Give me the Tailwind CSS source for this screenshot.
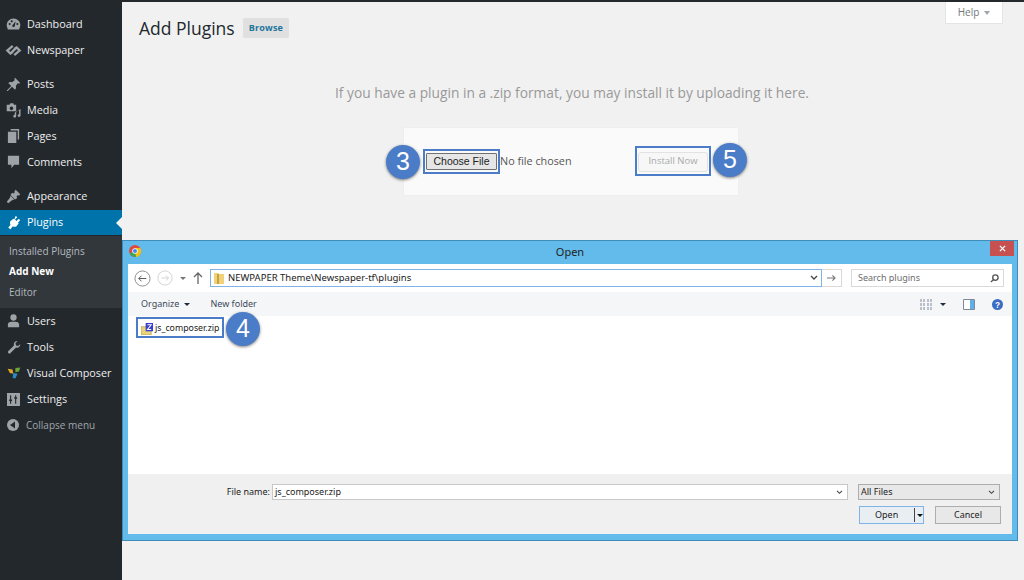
<!DOCTYPE html>
<html lang="en">
<head>
<meta charset="UTF-8">
<title>Add Plugins</title>
<script src="https://cdn.jsdelivr.net/npm/@tailwindcss/browser@4"></script>
</head>
<body class="w-[1024px] h-[580px] overflow-hidden bg-[#f1f1f1] font-['Open_Sans',sans-serif]">
<div class="relative flex h-[580px] w-[1024px] overflow-hidden">
  <!-- Sidebar -->
  <aside class="w-[122px] h-full shrink-0 bg-[#23282d] text-[10.800px] text-[#eeeeee] pt-[11px]">
    <div class="flex items-center h-[26px]">
      <div class="w-[27px] flex justify-center"><svg class="w-[15px] h-[14px]" viewBox="0 0 20 20" fill="#9ea3a8"><path d="M10 2a9.500 9.500 0 0 0-9 13l1 3h16l1-3a9.500 9.500 0 0 0-9-13zM4.500 11.500a1.500 1.500 0 1 1 0-3 1.500 1.500 0 0 1 0 3zm3-4a1.500 1.500 0 1 1 0-3 1.500 1.500 0 0 1 0 3zm3.500 6.500a2 2 0 0 1-3-1.500L13 6l-1 6a2 2 0 0 1-1 2zm4.500-2.500a1.500 1.500 0 1 1 0-3 1.500 1.500 0 0 1 0 3z"/></svg></div>
      <span>Dashboard</span>
    </div>
    <div class="flex items-center h-[26px]">
      <div class="w-[27px] flex justify-center"><svg class="w-[17px] h-[13px]" viewBox="0 0 22 16" fill="none" stroke="#9ea3a8" stroke-width="3"><path d="M10 2 3 8l4 4 3-2M12 14l7-6-4-4-3 2M8 11l6-6"/></svg></div>
      <span>Newspaper</span>
    </div>
    <div class="flex items-center h-[26px] mt-[8px]">
      <div class="w-[27px] flex justify-center"><svg class="w-[15px] h-[15px]" viewBox="0 0 20 20" fill="#9ea3a8"><path d="M12 1l7 7-2 1-1-1-3 4c1 2 0 4-1 5L8 13l-6 6-1-1 6-6-4-4c1-1 3-2 5-1l4-3-1-1z"/></svg></div>
      <span>Posts</span>
    </div>
    <div class="flex items-center h-[26px]">
      <div class="w-[27px] flex justify-center"><svg class="w-[16px] h-[15px]" viewBox="0 0 22 20" fill="#9ea3a8"><path d="M1 2h4l1-2h4l1 2h3v9H1zm6.500 2.500a2.500 2.500 0 1 0 0 5 2.500 2.500 0 0 0 0-5zM20 8v9a2 2 0 1 1-2-2V10l-4 1v7a2 2 0 1 1-2-2v-3z"/></svg></div>
      <span>Media</span>
    </div>
    <div class="flex items-center h-[26px]">
      <div class="w-[27px] flex justify-center"><svg class="w-[13px] h-[14px]" viewBox="0 0 18 20" fill="#9ea3a8"><path d="M5 0h12v15h-2V2H5zM1 4h12v16H1z"/></svg></div>
      <span>Pages</span>
    </div>
    <div class="flex items-center h-[26px]">
      <div class="w-[27px] flex justify-center"><svg class="w-[13px] h-[14px]" viewBox="0 0 18 20" fill="#9ea3a8"><path d="M1 1h16v13H10l-4 5v-5H1z"/></svg></div>
      <span>Comments</span>
    </div>
    <div class="flex items-center h-[26px] mt-[8px]">
      <div class="w-[27px] flex justify-center"><svg class="w-[15px] h-[15px]" viewBox="0 0 20 20" fill="#9ea3a8"><path d="M13 1l6 6-2 2-1-1-2 2 1 2-3 2-6-6 2-3 2 1 2-2-1-1zM6 9l5 5-3 1-5 4-2-2 4-5z"/></svg></div>
      <span>Appearance</span>
    </div>
    <div class="relative flex items-center h-[25px] mt-[1px] bg-[#0073aa] text-white">
      <div class="w-[27px] flex justify-center"><svg class="w-[15px] h-[15px]" viewBox="0 0 20 20" fill="#ffffff"><path d="M13 1l2 2-3 3 2 2 3-3 2 2-3 3 1 1-3 4c-2 1-4 1-5 0l-3 4-3-2 3-4c-1-2-1-3 0-5l4-3 1 1z"/></svg></div>
      <span>Plugins</span>
      <span class="absolute right-0 top-[7px] w-0 h-0 border-y-[6px] border-y-transparent border-r-[6px] border-r-[#f1f1f1]"></span>
    </div>
    <div class="h-[72px] mt-[1px] bg-[#32373c] pt-[5px] text-[10px] text-[#b4b9be] pl-[9px]">
      <div class="h-[20px] leading-[20px]">Installed Plugins</div>
      <div class="h-[21px] leading-[21px] font-bold text-white">Add New</div>
      <div class="h-[20px] leading-[20px]">Editor</div>
    </div>
    <div class="flex items-center h-[26px]">
      <div class="w-[27px] flex justify-center"><svg class="w-[13px] h-[14px]" viewBox="0 0 18 20" fill="#9ea3a8"><circle cx="9" cy="5" r="4.500"/><path d="M1 19v-4c0-3 3-4 5-4h6c2 0 5 1 5 4v4z"/></svg></div>
      <span>Users</span>
    </div>
    <div class="flex items-center h-[26px]">
      <div class="w-[27px] flex justify-center"><svg class="w-[14px] h-[15px]" viewBox="0 0 20 20" fill="#9ea3a8"><path d="M14 1c-3 0-5 3-4 6l-8 8c-1 1-1 2 0 3s2 1 3 0l8-8c3 1 6-1 6-5l-3 3-3-1-1-3 3-3z"/></svg></div>
      <span>Tools</span>
    </div>
    <div class="flex items-center h-[26px]">
      <div class="w-[27px] flex justify-center"><svg class="w-[14px] h-[14px]" viewBox="0 0 20 20"><path d="M1 4l7 1 1 6-5-1z" fill="#e0a526"/><path d="M12 3l7-1-2 6-5 1z" fill="#6aa53b"/><path d="M9 10l6 1-3 7-4-1z" fill="#2b8cc4"/></svg></div>
      <span>Visual Composer</span>
    </div>
    <div class="flex items-center h-[26px]">
      <div class="w-[27px] flex justify-center"><svg class="w-[13px] h-[13px]" viewBox="0 0 18 18"><path d="M0 0h18v18H0z" fill="#9ea3a8"/><path d="M5 3v12M12 3v12" stroke="#23282d" stroke-width="1.500"/><path d="M3 10h4M10 7h4" stroke="#23282d" stroke-width="2"/></svg></div>
      <span>Settings</span>
    </div>
    <div class="flex items-center h-[26px] text-[10px] text-[#a0a5aa]">
      <div class="w-[26px] flex justify-center"><svg class="w-[12px] h-[12px]" viewBox="0 0 12 12"><circle cx="6" cy="6" r="6" fill="#9ea3a8"/><path d="M8 2.500v7L3 6z" fill="#23282d"/></svg></div>
      <span>Collapse menu</span>
    </div>
  </aside>

  <!-- Main -->
  <main class="flex-1 border-t-2 border-t-[#23282d] relative">
    <div class="flex items-center gap-[8px] pl-[17px] pt-[14px] h-[38px]">
      <h1 class="text-[17.500px] text-[#23282d] leading-[24px]">Add Plugins</h1>
      <span class="bg-[#e0e0e0] rounded-[2px] h-[20px] px-[6px] leading-[20px] text-[9px] font-bold text-[#21759b] tracking-[0.2px]">Browse</span>
    </div>
    <p class="text-center text-[13.750px] text-[#999999] mt-[43px] leading-[20px] ml-[-2px]">If you have a plugin in a .zip format, you may install it by uploading it here.</p>
    <div class="ml-[281px] mt-[24px] w-[336px] h-[69px] bg-[#fafafa] border border-[#eeeeee] flex items-center pl-[22px] pr-[30px]">
      <button class="h-[17px] w-[71px] bg-[#e6e6e6] border border-[#707070] rounded-[1px] text-[10.500px] text-[#222222] font-['Liberation_Sans',sans-serif]">Choose File</button>
      <span class="ml-[3px] text-[10.800px] text-[#555555]">No file chosen</span>
      <button class="ml-auto h-[20px] w-[70px] bg-[#f7f7f7] border border-[#e2e2e2] rounded-[3px] text-[9.500px] text-[#a9a9a9]">Install Now</button>
    </div>
    <div class="absolute top-0 right-[21px] w-[58px] h-[22px] bg-white border border-[#e5e5e5] border-t-0 flex items-center justify-center gap-[5px] text-[10px] text-[#72777c]">
      <span>Help</span><span class="w-0 h-0 border-x-[3px] border-x-transparent border-t-[4px] border-t-[#a0a5aa]"></span>
    </div>
  </main>

  <!-- Open dialog -->
  <section class="absolute left-[122px] top-[240px] w-[896px] h-[301px] bg-[#63bbec] border border-[#3f8cb8] flex flex-col font-['Noto_Sans',sans-serif]">
    <div class="relative h-[23px] shrink-0 flex items-center justify-center text-[11px] text-[#222222]">
      <svg class="absolute left-[6px] top-[4px] w-[12px] h-[12px]" viewBox="0 0 24 24"><circle cx="12" cy="12" r="12" fill="#dd4b3e"/><path d="M12 12 1.500 17A12 12 0 0 0 14 24z" fill="#3aa757"/><path d="M12 6h10.500A12 12 0 0 1 14 24z" fill="#f4c20d"/><circle cx="12" cy="12" r="5.500" fill="#ffffff"/><circle cx="12" cy="12" r="4" fill="#4285f4"/></svg>
      <span>Open</span>
      <div class="absolute right-[3px] top-0 w-[24px] h-[15px] bg-[#c75050] flex items-center justify-center">
        <svg class="w-[7px] h-[7px]" viewBox="0 0 8 8" stroke="#ffffff" stroke-width="1.500"><path d="M1 1l6 6M7 1 1 7"/></svg>
      </div>
    </div>
    <div class="mx-[5px] flex-1 flex flex-col bg-white min-h-0">
      <!-- address row -->
      <div class="h-[28px] shrink-0 flex items-center pl-[6px] pr-[8px]">
        <svg class="w-[17px] h-[17px]" viewBox="0 0 18 18" fill="none" stroke="#8a8a8a"><circle cx="9" cy="9" r="8"/><path d="M13 9H5m3-3L5 9l3 3" stroke="#555555"/></svg>
        <svg class="w-[16px] h-[16px] ml-[6px]" viewBox="0 0 18 18" fill="none" stroke="#cfcfcf"><circle cx="9" cy="9" r="8"/><path d="M5 9h8m-3-3 3 3-3 3"/></svg>
        <span class="ml-[7px] w-0 h-0 border-x-[3px] border-x-transparent border-t-[3px] border-t-[#777777]"></span>
        <svg class="ml-[7px] w-[10px] h-[12px]" viewBox="0 0 10 12" fill="none" stroke="#666666" stroke-width="1.300"><path d="M5 12V1M1 5l4-4 4 4"/></svg>
        <div class="ml-[7px] w-[612px] h-[18px] border border-[#7eb4ea] flex items-center pl-[1px] text-[9.500px] text-[#222222]">
          <svg class="w-[14px] h-[14px] shrink-0" viewBox="0 0 14 14"><path d="M2 2h4l1 1h5v10H2z" fill="#f0d27a"/><path d="M5 3h2v10H5z" fill="#c9a13f"/></svg>
          <span class="ml-[2px]">NEWPAPER Theme\Newspaper-tf\plugins</span>
          <svg class="ml-auto mr-[3px] w-[8px] h-[6px]" viewBox="0 0 8 6" fill="none" stroke="#444444" stroke-width="1.300"><path d="M1 1l3 3 3-3"/></svg>
        </div>
        <div class="w-[20px] h-[18px] border border-l-0 border-[#d9d9d9] flex items-center justify-center">
          <svg class="w-[9px] h-[8px]" viewBox="0 0 10 8" fill="none" stroke="#777777" stroke-width="1.200"><path d="M0 4h9M6 1l3 3-3 3"/></svg>
        </div>
        <div class="ml-auto w-[153px] h-[18px] border border-[#d9d9d9] flex items-center pl-[6px] pr-[4px] text-[9px] text-[#6d6d6d]">
          <span>Search plugins</span>
          <svg class="ml-auto w-[9px] h-[9px]" viewBox="0 0 10 10" fill="none" stroke="#555555" stroke-width="1.500"><circle cx="6" cy="4" r="3"/><path d="M4 6 1 9"/></svg>
        </div>
      </div>
      <!-- command bar -->
      <div class="h-[24px] shrink-0 bg-[#f5f6f7] flex items-center pl-[13px] pr-[9px] text-[9px] text-[#3b4a5c]">
        <span>Organize</span>
        <span class="ml-[5px] w-0 h-0 border-x-[3px] border-x-transparent border-t-[3px] border-t-[#1f2a44]"></span>
        <span class="ml-[20px]">New folder</span>
        <svg class="ml-auto w-[12px] h-[11px]" viewBox="0 0 12 11" fill="#b9c0cc"><path d="M0 0h2v3H0zM3 0h2v3H3zM7 0h2v3H7zM10 0h2v3h-2zM0 4h2v3H0zM3 4h2v3H3zM7 4h2v3H7zM10 4h2v3h-2zM0 8h2v3H0zM3 8h2v3H3zM7 8h2v3H7zM10 8h2v3h-2z"/></svg>
        <span class="ml-[8px] w-0 h-0 border-x-[3px] border-x-transparent border-t-[3px] border-t-[#1f2a44]"></span>
        <svg class="ml-[17px] w-[12px] h-[11px]" viewBox="0 0 12 11"><path d="M.5.500h11v10H.5z" fill="#ffffff" stroke="#7f8a96"/><path d="M7 1h4v9H7z" fill="#5fb0ea"/></svg>
        <svg class="ml-[17px] w-[11px] h-[11px]" viewBox="0 0 12 12"><circle cx="6" cy="6" r="6" fill="#3b6cc4"/><text x="6" y="9.500" text-anchor="middle" font-size="9" font-weight="700" fill="#ffffff" font-family="Liberation Sans">?</text></svg>
      </div>
      <!-- file list -->
      <div class="flex-1 min-h-0 pl-[13px] pt-[6px]">
        <div class="flex items-center h-[13px] text-[8.800px] text-[#222222]">
          <svg class="w-[13px] h-[12px]" viewBox="0 0 14 13"><path d="M0 4h11v9H0z" fill="#e8d27a" stroke="#a08a3a" stroke-width=".6"/><path d="M5 0h8v9H5z" fill="#3b3fd0"/><path d="M7 2h4L7 7h4" fill="none" stroke="#ffffff" stroke-width="1.100"/></svg>
          <span class="ml-[1px]">js_composer.zip</span>
        </div>
      </div>
      <!-- footer -->
      <div class="h-[60px] shrink-0 bg-[#f0f0f0] text-[9px] text-[#222222] pt-[10px]">
        <div class="flex items-center h-[16px] pl-[96px]">
          <span class="w-[46px] text-right">File name:</span>
          <div class="ml-[2px] w-[576px] h-[16px] bg-white border border-[#c8c8c8] flex items-center pl-[2px]">
            <span>js_composer.zip</span>
            <svg class="ml-auto mr-[4px] w-[7px] h-[5px]" viewBox="0 0 8 6" fill="none" stroke="#444444" stroke-width="1.300"><path d="M1 1l3 3 3-3"/></svg>
          </div>
          <div class="ml-[10px] w-[142px] h-[16px] bg-[#e8e8e8] border border-[#adadad] flex items-center pl-[2px]">
            <span>All Files</span>
            <svg class="ml-auto mr-[4px] w-[7px] h-[5px]" viewBox="0 0 8 6" fill="none" stroke="#444444" stroke-width="1.300"><path d="M1 1l3 3 3-3"/></svg>
          </div>
        </div>
        <div class="flex items-center mt-[6px] pl-[731px]">
          <div class="relative w-[65px] h-[18px] bg-[#e9eef3] border border-[#7eb4ea] flex items-center pl-[15px]">
            <span>Open</span>
            <span class="absolute left-[54px] top-[1px] w-[1px] h-[14px] bg-[#444444]"></span>
            <span class="absolute left-[57px] top-[7px] w-0 h-0 border-x-[3px] border-x-transparent border-t-[3px] border-t-[#111111]"></span>
          </div>
          <div class="ml-[11px] w-[66px] h-[18px] bg-[#e8e8e8] border border-[#adadad] flex items-center justify-center">Cancel</div>
        </div>
      </div>
    </div>
    <div class="h-[6px] shrink-0"></div>
  </section>

  <!-- Highlight boxes and step numbers -->
  <div class="absolute left-[423px] top-[149px] w-[77px] h-[25px] border-2 border-[#4a7cc7]"></div>
  <div class="absolute left-[635px] top-[146px] w-[76px] h-[30px] border-2 border-[#4a7cc7]"></div>
  <div class="absolute left-[136px] top-[317px] w-[88px] h-[21px] border-2 border-[#4a7cc7]"></div>
  <div class="absolute left-[386px] top-[145px] w-[34px] h-[34px] rounded-full bg-[#4a7cc7] shadow-[0_1px_3px_rgba(0,0,0,0.5)] flex items-center justify-center text-white text-[25px] font-['Liberation_Sans',sans-serif]">3</div>
  <div class="absolute left-[226px] top-[312px] w-[34px] h-[34px] rounded-full bg-[#4a7cc7] shadow-[0_1px_3px_rgba(0,0,0,0.5)] flex items-center justify-center text-white text-[25px] font-['Liberation_Sans',sans-serif]">4</div>
  <div class="absolute left-[713px] top-[143px] w-[34px] h-[34px] rounded-full bg-[#4a7cc7] shadow-[0_1px_3px_rgba(0,0,0,0.5)] flex items-center justify-center text-white text-[25px] font-['Liberation_Sans',sans-serif]">5</div>
</div>
</body>
</html>
